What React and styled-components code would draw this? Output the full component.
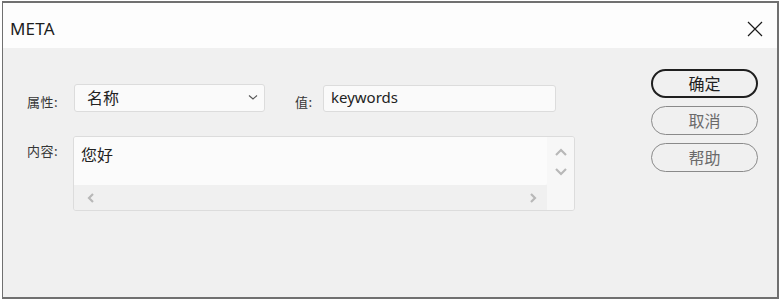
import React from "react";
import styled, { createGlobalStyle } from "styled-components";

const Global = createGlobalStyle`
  html, body {
    margin: 0;
    padding: 0;
    background: #ffffff;
  }
  body {
    font-family: "Segoe UI", "Noto Sans", "Noto Sans CJK SC", sans-serif;
  }
`;

const Window = styled.div`
  box-sizing: border-box;
  margin: 1px 0 0 2px;
  width: 777px;
  height: 298px;
  border: 2px solid #707070;
  border-left-width: 1px;
  display: flex;
  flex-direction: column;
  background: #f0f0f0;
`;

const TitleBar = styled.div`
  height: 45px;
  background: #fdfdfd;
  display: flex;
  align-items: center;
  justify-content: space-between;
  padding: 6px 14px 0 7px;
  box-sizing: border-box;
`;

const Title = styled.div`
  font-size: 17px;
  color: #1e1e1e;
  letter-spacing: 0.2px;
`;

const CloseButton = styled.div`
  width: 16px;
  height: 16px;
  display: flex;
  align-items: center;
  justify-content: center;
`;

const Body = styled.div`
  flex: 1;
  display: flex;
  justify-content: space-between;
  padding: 0 19px 0 24px;
`;

const Form = styled.div`
  display: flex;
  flex-direction: column;
  gap: 24px;
  padding-top: 36px;
`;

const Row = styled.div`
  display: flex;
  align-items: ${(p) => (p.$top ? "flex-start" : "center")};
`;

const Label = styled.div`
  font-family: "Noto Sans CJK SC", sans-serif;
  font-size: 13px;
  letter-spacing: 0.5px;
  color: #363636;
  width: ${(p) => p.$w}px;
  margin-left: ${(p) => p.$ml || 0}px;
  padding-top: ${(p) => p.$pt || 0}px;
  flex-shrink: 0;
`;

const Select = styled.div`
  box-sizing: border-box;
  width: 191px;
  height: 28px;
  border: 1px solid #dcdcdc;
  border-radius: 3px;
  background: #fafafa;
  display: flex;
  align-items: center;
  justify-content: space-between;
  padding: 0 6px 2px 12px;
  font-family: "Noto Sans CJK SC", sans-serif;
  font-size: 16px;
  color: #222;
`;

const TextInput = styled.div`
  box-sizing: border-box;
  width: 233px;
  height: 27px;
  border: 1px solid #dcdcdc;
  border-radius: 3px;
  background: #fafafa;
  display: flex;
  align-items: center;
  padding: 0 0 2px 7px;
  font-family: "Segoe UI", "Noto Sans", sans-serif;
  font-size: 15px;
  color: #222;
`;

const TextArea = styled.div`
  box-sizing: border-box;
  width: 502px;
  height: 75px;
  border: 1px solid #dcdcdc;
  border-radius: 3px;
  background: #f4f4f4;
  display: grid;
  grid-template-columns: 1fr 27px;
  grid-template-rows: 48px 1fr;
  overflow: hidden;
`;

const TextContent = styled.div`
  background: #fbfbfb;
  padding: 5px 0 0 7px;
  font-family: "Noto Sans CJK SC", sans-serif;
  font-size: 16px;
  color: #222;
  border-bottom-right-radius: 2px;
`;

const VScroll = styled.div`
  background: #f7f7f7;
  display: flex;
  flex-direction: column;
  align-items: center;
  padding-top: 11px;
  gap: 12px;
`;

const HScroll = styled.div`
  background: #f0f0f0;
  display: flex;
  align-items: center;
  justify-content: space-between;
  padding: 0 10px 0 13px;
  grid-column: 1 / 2;
`;

const Corner = styled.div`
  background: #f7f7f7;
`;

const Buttons = styled.div`
  display: flex;
  flex-direction: column;
  gap: 8px;
  padding-top: 21px;
`;

const Button = styled.div`
  box-sizing: border-box;
  width: 107px;
  height: 29px;
  border-radius: 15px;
  border: ${(p) => (p.$primary ? "2px solid #1f1f1f" : "1px solid #8a8a8a")};
  color: ${(p) => (p.$primary ? "#1f1f1f" : "#6a6a6a")};
  background: #f0f0f0;
  display: flex;
  align-items: center;
  justify-content: center;
  font-family: "Noto Sans CJK SC", sans-serif;
  font-size: 16px;
  padding-bottom: 1px;
`;

const Arrow = ({ d, w = 12, h = 8, color = "#b8b8b8", sw = 2.2 }) => (
  <svg width={w} height={h} viewBox={`0 0 ${w} ${h}`}>
    <path d={d} fill="none" stroke={color} strokeWidth={sw} />
  </svg>
);

export default function App() {
  return (
    <>
      <Global />
      <Window>
        <TitleBar>
          <Title>META</Title>
          <CloseButton>
            <svg width="16" height="16" viewBox="0 0 16 16">
              <path d="M1 1 L15 15 M15 1 L1 15" stroke="#1a1a1a" strokeWidth="1.2" />
            </svg>
          </CloseButton>
        </TitleBar>
        <Body>
          <Form>
            <Row>
              <Label $w={47} $pt={6}>属性:</Label>
              <Select>
                <span>名称</span>
                <Arrow d="M1 1.5 L5 5 L9 1.5" w={10} h={7} color="#555" sw={1.1} />
              </Select>
              <Label $w={28} $ml={30} $pt={6}>值:</Label>
              <TextInput>keywords</TextInput>
            </Row>
            <Row $top>
              <Label $w={46} $pt={5}>内容:</Label>
              <TextArea>
                <TextContent>您好</TextContent>
                <VScroll>
                  <Arrow d="M1 7 L6 2 L11 7" />
                  <Arrow d="M1 1 L6 6 L11 1" />
                </VScroll>
                <HScroll>
                  <Arrow d="M6 1 L2 5 L6 9" w={8} h={10} />
                  <Arrow d="M2 1 L6 5 L2 9" w={8} h={10} />
                </HScroll>
                <Corner />
              </TextArea>
            </Row>
          </Form>
          <Buttons>
            <Button $primary>确定</Button>
            <Button>取消</Button>
            <Button>帮助</Button>
          </Buttons>
        </Body>
      </Window>
    </>
  );
}
